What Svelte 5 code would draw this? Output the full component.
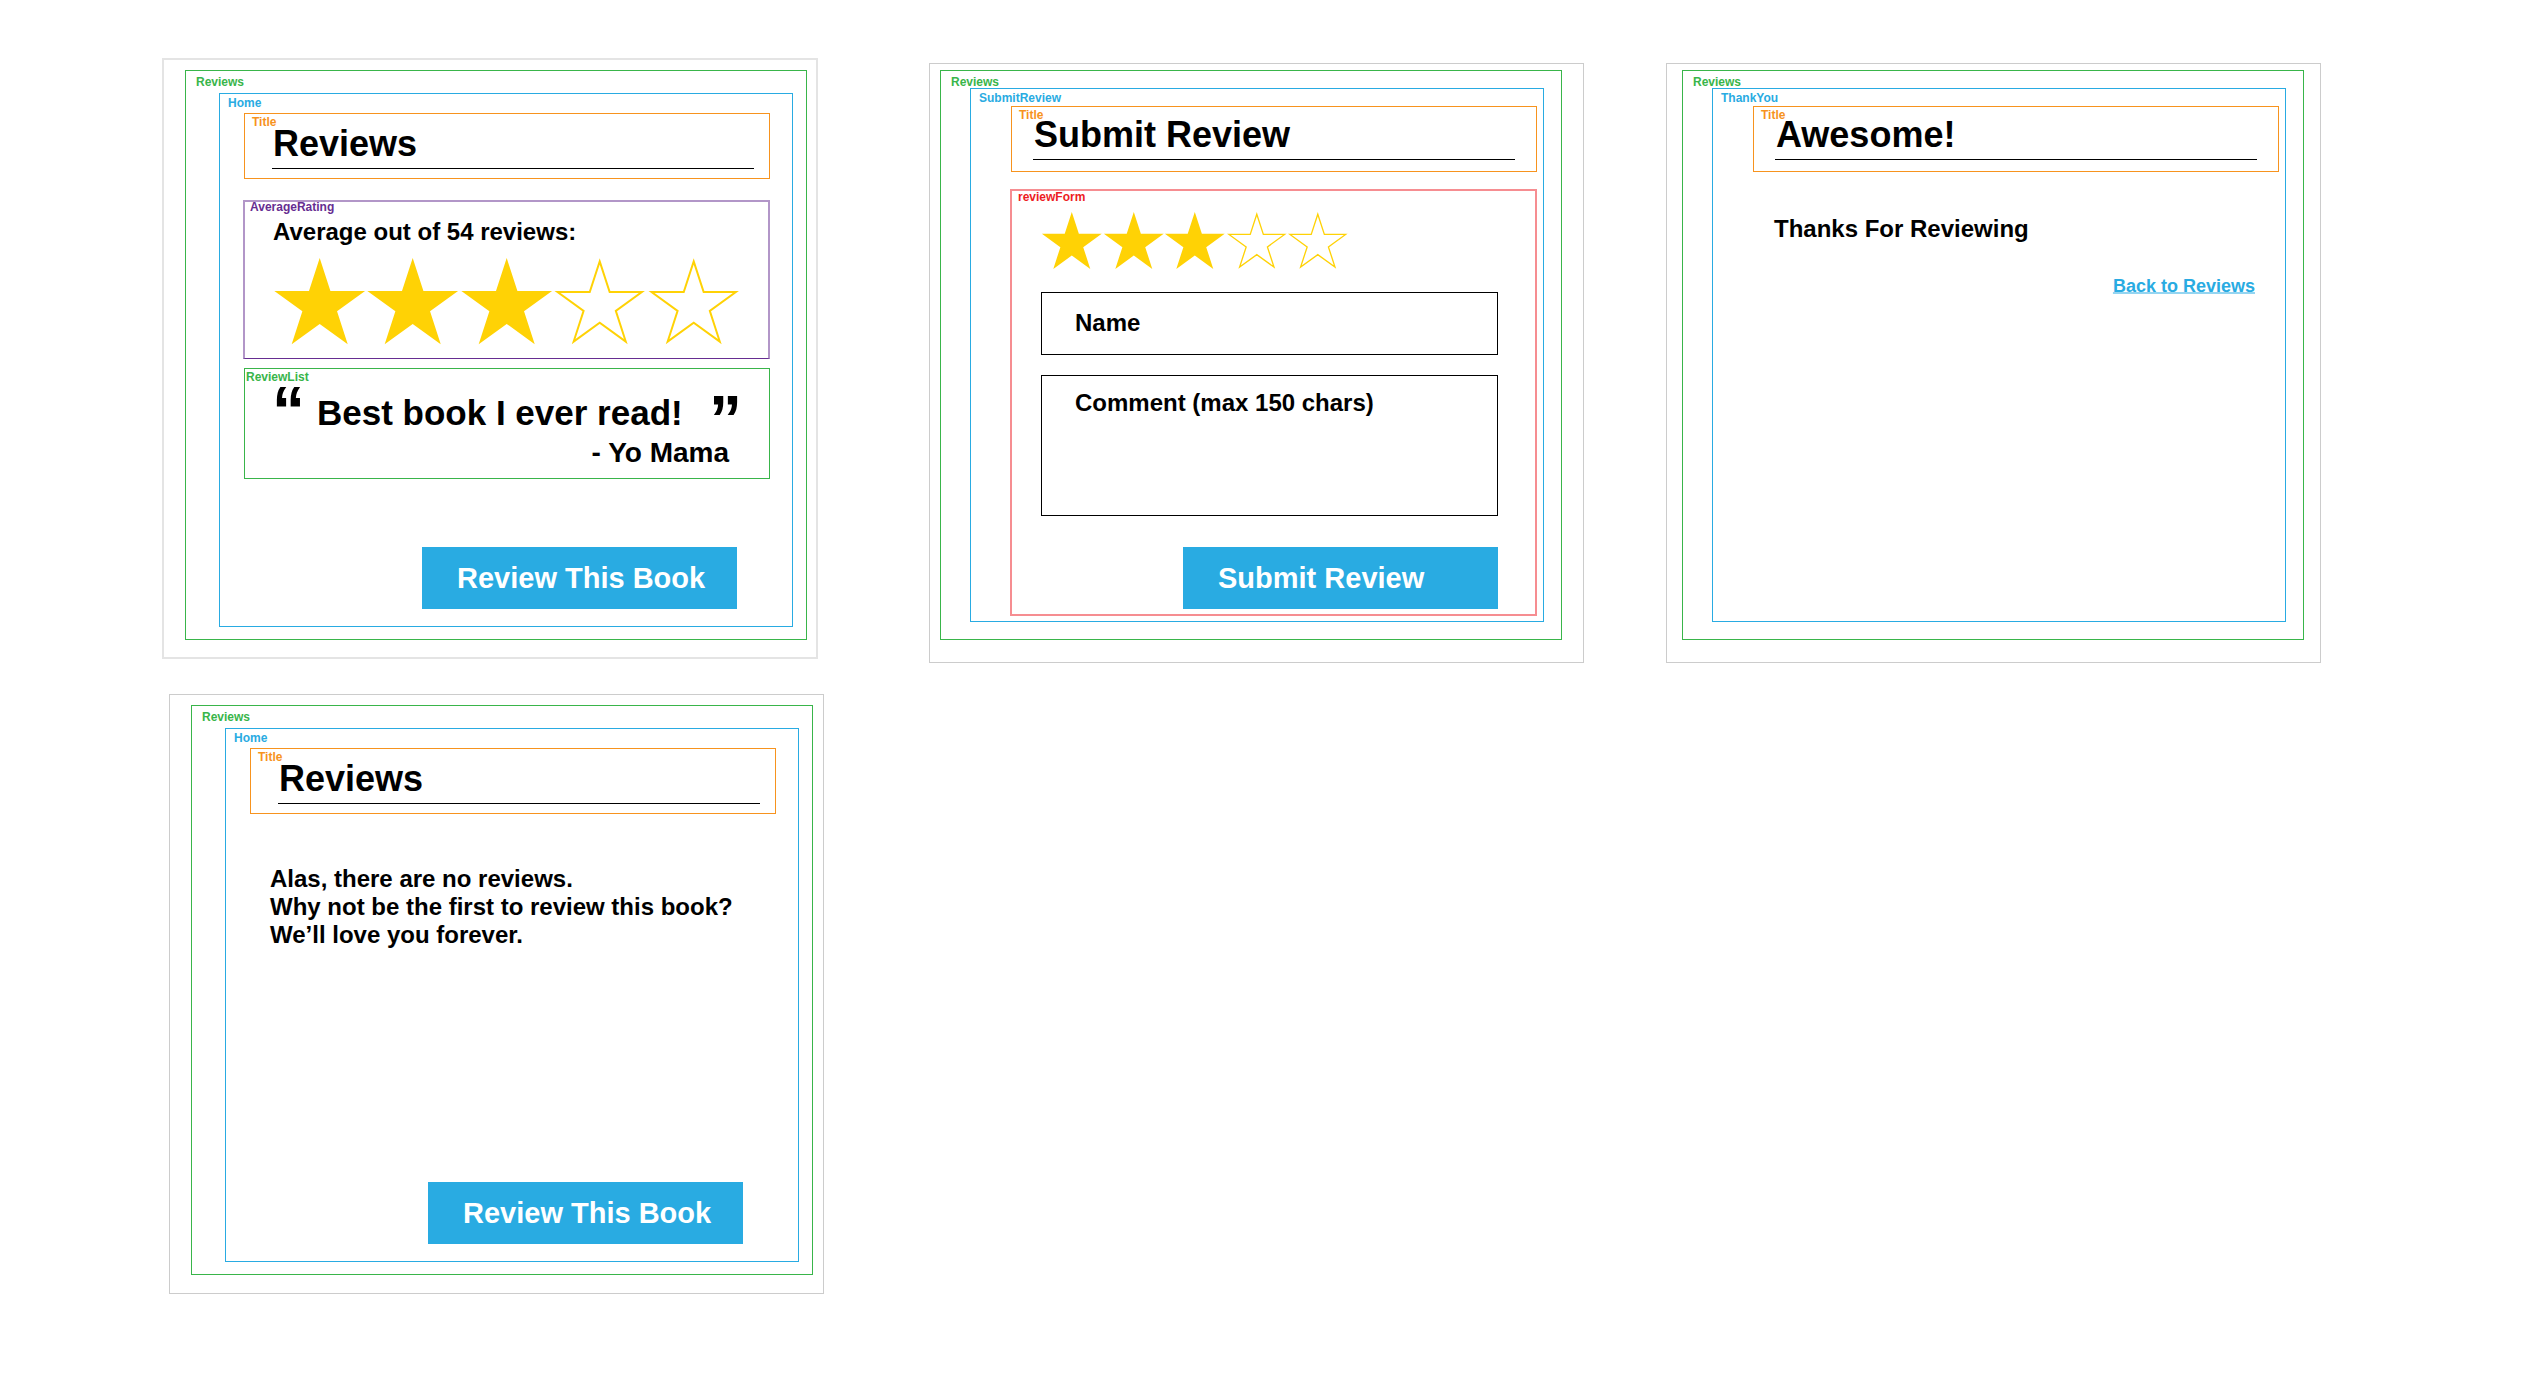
<script>
  const scale = [1, 2, 3, 4, 5];
  const average = 3;
  const reviewCount = 54;
  let rating = $state(3);
  let name = $state('');
  let comment = $state('');
</script>

{#snippet star(filled)}
  <svg class="star" viewBox="0 0 94 88" aria-hidden="true">
    {#if filled}
      <polygon
        class="star-solid"
        points="47,0 57.78,33.17 92.65,33.17 64.44,53.67 75.21,86.83 47,66.34 18.79,86.83 29.56,53.67 1.35,33.17 36.22,33.17"
      />
    {:else}
      <polygon
        class="star-outline"
        points="47,3.4 57.02,34.22 89.42,34.22 63.21,53.27 73.22,84.08 47,65.04 20.78,84.08 30.79,53.27 4.58,34.22 36.98,34.22"
      />
    {/if}
  </svg>
{/snippet}

{#snippet title(text)}
  <header class="frame title">
    <span class="tag">Title</span>
    <h1>{text}</h1>
  </header>
{/snippet}

<main class="board">
  <div class="column">
    <article class="card home-card filled">
      <section class="frame reviews">
        <span class="tag">Reviews</span>
        <div class="frame route">
          <span class="tag">Home</span>
          {@render title('Reviews')}

          <section class="frame average">
            <span class="tag">AverageRating</span>
            <h2>Average out of {reviewCount} reviews:</h2>
            <div class="stars" role="img" aria-label="{average} out of 5 stars">
              {#each scale as n}
                {@render star(n <= average)}
              {/each}
            </div>
          </section>

          <section class="frame list">
            <span class="tag">ReviewList</span>
            <blockquote>
              <span class="mark open">“</span>
              <p>Best book I ever read!</p>
              <span class="mark close">”</span>
            </blockquote>
            <cite>- Yo Mama</cite>
          </section>

          <button type="button" class="action">Review This Book</button>
        </div>
      </section>
    </article>

    <article class="card home-card empty">
      <section class="frame reviews">
        <span class="tag">Reviews</span>
        <div class="frame route">
          <span class="tag">Home</span>
          {@render title('Reviews')}
          <p class="message">
            Alas, there are no reviews.<br />
            Why not be the first to review this book?<br />
            We’ll love you forever.
          </p>
          <button type="button" class="action">Review This Book</button>
        </div>
      </section>
    </article>
  </div>

  <div class="column lowered">
    <article class="card step-card submit">
      <section class="frame reviews">
        <span class="tag">Reviews</span>
        <div class="frame route">
          <span class="tag">SubmitReview</span>
          {@render title('Submit Review')}

          <form class="frame form" onsubmit={(e) => e.preventDefault()}>
            <span class="tag">reviewForm</span>
            <div class="stars small" role="radiogroup" aria-label="Rating">
              {#each scale as n}
                <label>
                  <input type="radio" name="rating" value={n} bind:group={rating} aria-label="{n} stars" />
                  {@render star(n <= rating)}
                </label>
              {/each}
            </div>
            <input class="field" type="text" placeholder="Name" aria-label="Name" bind:value={name} />
            <textarea
              class="field area"
              maxlength="150"
              placeholder="Comment (max 150 chars)"
              aria-label="Comment (max 150 chars)"
              bind:value={comment}
            ></textarea>
            <button type="submit" class="action">Submit Review</button>
          </form>
        </div>
      </section>
    </article>
  </div>

  <div class="column lowered">
    <article class="card step-card thanks">
      <section class="frame reviews">
        <span class="tag">Reviews</span>
        <div class="frame route">
          <span class="tag">ThankYou</span>
          {@render title('Awesome!')}
          <p class="message">Thanks For Reviewing</p>
          <a class="back" href="#reviews">Back to Reviews</a>
        </div>
      </section>
    </article>
  </div>
</main>

<style>
  :global(body) {
    margin: 0;
    background: #fff;
  }

  .board,
  .board * {
    box-sizing: border-box;
  }

  .board {
    --green: #39b54a;
    --blue: #29abe2;
    --orange: #f7931e;
    --purple: #662d91;
    --red: #ed1c24;
    --gold: #ffd205;
    display: grid;
    grid-template-columns: 662fr 105fr 655fr 82fr 655fr;
    align-items: start;
    padding: 58px 203px 58px 162px;
    color: #000;
    font-family: 'Liberation Sans', Arial, sans-serif;
    font-weight: 700;
  }

  .column {
    display: flex;
    flex-direction: column;
    gap: 35px;
    min-width: 0;
  }

  .column:nth-child(2) {
    grid-column: 3;
  }

  .column:nth-child(3) {
    grid-column: 5;
  }

  .lowered {
    padding-top: 5px;
  }

  h1,
  h2,
  p,
  blockquote {
    margin: 0;
  }

  .card {
    border: 1px solid #ccc;
  }

  .filled {
    margin-right: 6px;
    border: 2px solid #e4e4e4;
    padding: 10px 9px 17px 21px;
  }

  .empty {
    margin-left: 7px;
    padding: 10px 10px 18px 21px;
  }

  .submit {
    padding: 6px 21px 22px 10px;
  }

  .thanks {
    padding: 6px 16px 22px 15px;
  }

  .frame {
    position: relative;
    border: 1px solid;
  }

  .tag {
    position: absolute;
    font-size: 12px;
    line-height: 14px;
  }

  .reviews {
    border-color: var(--green);
  }

  .reviews > .tag {
    top: 4px;
    left: 10px;
    color: var(--green);
  }

  .home-card .reviews {
    padding: 22px 13px 12px 33px;
  }

  .step-card .reviews {
    padding: 17px 17px 17px 29px;
  }

  .route {
    display: flex;
    flex-direction: column;
    min-height: 534px;
    border-color: var(--blue);
  }

  .route > .tag {
    top: 2px;
    left: 8px;
    color: var(--blue);
  }

  .home-card .route {
    padding: 19px 22px 17px 24px;
  }

  .step-card .route {
    padding: 17px 6px 5px 40px;
  }

  .title {
    border-color: var(--orange);
  }

  .title > .tag {
    top: 1px;
    left: 7px;
    color: var(--orange);
  }

  .home-card .title {
    padding: 10px 15px 9px 27px;
  }

  .step-card .title {
    padding: 8px 21px 11px 21px;
  }

  h1 {
    border-bottom: 1px solid #000;
    padding: 0 0 4px 1px;
    font-size: 36px;
    line-height: 40px;
  }

  h2,
  .message {
    font-size: 24px;
    line-height: 28px;
  }

  .average {
    min-height: 159px;
    margin: 21px 0 0 -1px;
    border-width: 2px 2px 1px;
    border-color: #b296c8 #b296c8 var(--purple);
    padding: 16px 28px 12px;
  }

  .average > .tag {
    top: -2px;
    left: 5px;
    color: var(--purple);
  }

  .stars {
    display: flex;
    max-width: 467px;
    margin-top: 12px;
  }

  .star {
    display: block;
    flex: 1;
    width: 100%;
    min-width: 0;
    overflow: visible;
  }

  .star-solid {
    fill: var(--gold);
  }

  .star-outline {
    fill: none;
    stroke: var(--gold);
    stroke-width: 2;
    stroke-miterlimit: 4;
  }

  .list {
    margin-top: 9px;
    border-color: var(--green);
    padding: 21px 27px 9px;
  }

  .list > .tag {
    top: 1px;
    left: 1px;
    color: var(--green);
  }

  blockquote {
    display: flex;
    align-items: flex-start;
    height: 47px;
  }

  blockquote p {
    padding: 3px 0 0 12px;
    font-size: 35px;
    line-height: 40px;
  }

  .mark {
    font-size: 66px;
    line-height: 40px;
  }

  .close {
    margin-left: auto;
    padding-top: 9px;
  }

  cite {
    display: block;
    padding-right: 13px;
    font-size: 28px;
    font-style: normal;
    line-height: 32px;
    text-align: right;
  }

  .action {
    align-self: flex-end;
    width: 315px;
    height: 62px;
    margin-top: auto;
    border: 0;
    padding: 0 0 0 35px;
    background: var(--blue);
    color: #fff;
    font: inherit;
    font-size: 29px;
    text-align: left;
    white-space: nowrap;
    cursor: pointer;
  }

  .home-card .action {
    margin-right: 33px;
  }

  .empty .message {
    padding: 51px 0 0 20px;
  }

  .form {
    display: flex;
    flex: 1;
    flex-direction: column;
    margin: 17px 0 0 -1px;
    border: 2px solid #f68d91;
    padding: 21px 37px 5px 29px;
  }

  .form > .tag {
    top: -1px;
    left: 6px;
    color: var(--red);
  }

  .small {
    width: 308px;
    height: 58px;
    margin: 0 0 22px;
  }

  .small label {
    position: relative;
    flex: 1;
    cursor: pointer;
  }

  .small input {
    position: absolute;
    inset: 0;
    margin: 0;
    opacity: 0;
    cursor: pointer;
  }

  .field {
    display: block;
    width: 100%;
    height: 63px;
    border: 1px solid #000;
    border-radius: 0;
    padding: 0 33px 2px;
    background: #fff;
    color: #000;
    font: inherit;
    font-size: 24px;
    line-height: 28px;
  }

  .field::placeholder {
    color: #000;
    opacity: 1;
  }

  .area {
    height: 141px;
    margin-top: 20px;
    padding: 13px 33px;
    resize: none;
  }

  .thanks .message {
    padding: 43px 0 0 21px;
  }

  .back {
    align-self: flex-end;
    margin: 33px 24px 0 0;
    color: var(--blue);
    font-size: 18px;
    line-height: 20px;
    text-decoration: underline 2px #94d5f1;
    text-decoration-skip-ink: none;
    text-underline-offset: 0;
  }
</style>
